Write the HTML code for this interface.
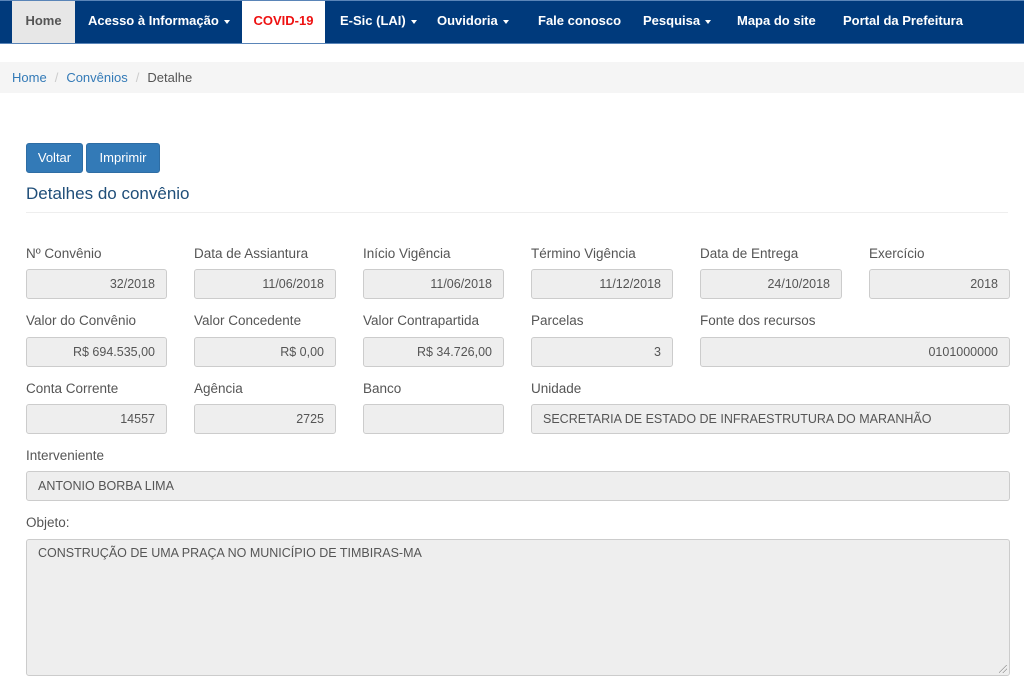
<!DOCTYPE html>
<html><head><meta charset="utf-8"><style>
*{box-sizing:border-box;margin:0;padding:0}
body{width:1024px;height:687px;overflow:hidden;background:#fff;font-family:"Liberation Sans",sans-serif;font-size:13px;color:#555;position:relative}
.nav{position:absolute;left:0;top:0;width:1024px;height:44px;background:#003a7c;border-top:1px solid #5a85b8;border-bottom:1px solid #5a85b8}
.nav span{position:absolute;top:0;height:42px;line-height:40px;color:#fff;font-weight:bold;font-size:13px;white-space:nowrap}
.caret{display:inline-block;width:0;height:0;border-left:3.5px solid transparent;border-right:3.5px solid transparent;border-top:4px solid #fff;vertical-align:middle;margin-left:5px}
.bc{position:absolute;left:0;top:62px;width:1024px;height:31px;background:#f5f5f5;line-height:31px;padding-left:12px;font-size:13px}
.bc a{color:#337ab7}.bc i{color:#ccc;font-style:normal;padding:0 8px}
.btn{position:absolute;top:143px;height:30px;background:#337ab7;border:1px solid #2e6da4;border-radius:3px;color:#fff;font-size:13px;line-height:28px;text-align:center}
h3{position:absolute;left:26px;top:184px;font-weight:normal;font-size:17px;color:#1f4e79}
.hr{position:absolute;left:26px;top:212px;width:982px;height:1px;background:#eee}
.l{position:absolute;font-size:13.5px;color:#555}
.i{position:absolute;height:30px;background:#eee;border:1px solid #ccc;border-radius:3px;font-size:12.5px;color:#555;line-height:28px;padding:0 11px;text-align:right;white-space:nowrap}
.i.t{text-align:left}
.grip{position:absolute;right:2px;bottom:2px;width:8px;height:8px;background:linear-gradient(135deg,transparent 45%,#999 45%,#999 52%,transparent 52%,transparent 70%,#999 70%,#999 77%,transparent 77%)}
</style></head><body>
<div class="nav">
<span style="left:12px;width:63px;background:#e7e7e7;color:#555;text-align:center">Home</span>
<span style="left:88px">Acesso à Informação<b class="caret"></b></span>
<span style="left:242px;width:83px;background:#fff;color:#e11;text-align:center">COVID-19</span>
<span style="left:340px">E-Sic (LAI)<b class="caret"></b></span>
<span style="left:437px">Ouvidoria<b class="caret"></b></span>
<span style="left:538px">Fale conosco</span>
<span style="left:643px">Pesquisa<b class="caret"></b></span>
<span style="left:737px">Mapa do site</span>
<span style="left:843px">Portal da Prefeitura</span>
</div>
<div class="bc"><a>Home</a><i>/</i><a>Convênios</a><i>/</i>Detalhe</div>
<div class="btn" style="left:26px;width:57px">Voltar</div>
<div class="btn" style="left:86px;width:74px">Imprimir</div>
<h3>Detalhes do convênio</h3>
<div class="hr"></div>

<div class="l" style="left:26px;top:246px">Nº Convênio</div>
<div class="l" style="left:194px;top:246px">Data de Assiantura</div>
<div class="l" style="left:363px;top:246px">Início Vigência</div>
<div class="l" style="left:531px;top:246px">Término Vigência</div>
<div class="l" style="left:700px;top:246px">Data de Entrega</div>
<div class="l" style="left:869px;top:246px">Exercício</div>
<div class="i" style="left:26px;top:269px;width:141px">32/2018</div>
<div class="i" style="left:194px;top:269px;width:142px">11/06/2018</div>
<div class="i" style="left:363px;top:269px;width:141px">11/06/2018</div>
<div class="i" style="left:531px;top:269px;width:142px">11/12/2018</div>
<div class="i" style="left:700px;top:269px;width:142px">24/10/2018</div>
<div class="i" style="left:869px;top:269px;width:141px">2018</div>

<div class="l" style="left:26px;top:313px">Valor do Convênio</div>
<div class="l" style="left:194px;top:313px">Valor Concedente</div>
<div class="l" style="left:363px;top:313px">Valor Contrapartida</div>
<div class="l" style="left:531px;top:313px">Parcelas</div>
<div class="l" style="left:700px;top:313px">Fonte dos recursos</div>
<div class="i" style="left:26px;top:337px;width:141px">R$ 694.535,00</div>
<div class="i" style="left:194px;top:337px;width:142px">R$ 0,00</div>
<div class="i" style="left:363px;top:337px;width:141px">R$ 34.726,00</div>
<div class="i" style="left:531px;top:337px;width:142px">3</div>
<div class="i" style="left:700px;top:337px;width:310px">0101000000</div>

<div class="l" style="left:26px;top:381px">Conta Corrente</div>
<div class="l" style="left:194px;top:381px">Agência</div>
<div class="l" style="left:363px;top:381px">Banco</div>
<div class="l" style="left:531px;top:381px">Unidade</div>
<div class="i" style="left:26px;top:404px;width:141px">14557</div>
<div class="i" style="left:194px;top:404px;width:142px">2725</div>
<div class="i" style="left:363px;top:404px;width:141px"></div>
<div class="i t" style="left:531px;top:404px;width:479px">SECRETARIA DE ESTADO DE INFRAESTRUTURA DO MARANHÃO</div>

<div class="l" style="left:26px;top:448px">Interveniente</div>
<div class="i t" style="left:26px;top:471px;width:984px">ANTONIO BORBA LIMA</div>
<div class="l" style="left:26px;top:515px">Objeto:</div>
<div class="i t" style="left:26px;top:539px;width:984px;height:137px;line-height:26px">CONSTRUÇÃO DE UMA PRAÇA NO MUNICÍPIO DE TIMBIRAS-MA<div class="grip"></div></div>
</body></html>
